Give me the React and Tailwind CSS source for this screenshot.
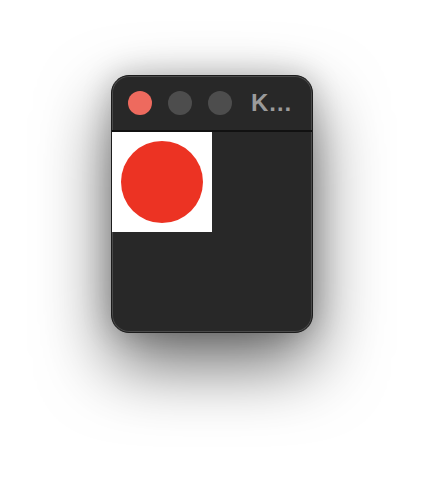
import React from "react";

const LIGHTS = ["bg-[#ee6a5e]", "bg-[#4d4d4d]", "bg-[#4d4d4d]"];

export default function App() {
  return (
    <div className="w-[424px] h-[480px] bg-white flex justify-center pt-[75px]" style={{ fontFamily: '"Liberation Sans", Arial, sans-serif' }}>
      {/* window */}
      <div className="w-[202px] h-[258px] flex flex-col rounded-[18px] overflow-hidden border border-[#1c1c1c] bg-[#282828] shadow-[inset_0_0_0_1px_#4a4a4a,0_30px_70px_rgba(0,0,0,0.6),0_0_30px_rgba(0,0,0,0.2)]">
        {/* title bar */}
        <div className="h-[54px] shrink-0 flex items-center pl-[16px] pr-[16px] gap-[16px]">
          {LIGHTS.map((c, i) => (
            <span key={i} className={`w-[24px] h-[24px] rounded-full shrink-0 ${c}`} />
          ))}
          <span className="flex-1 min-w-0 truncate ml-[3px] text-[24px] leading-none font-bold text-[#9b9b9b]">
            Kreis
          </span>
        </div>
        <div className="h-[2px] shrink-0 bg-[#111111]" />
        {/* content */}
        <div className="flex-1">
          <div className="w-[100px] h-[100px] bg-white flex items-center justify-center">
            <div className="w-[82px] h-[82px] rounded-full bg-[#ec3323]" />
          </div>
        </div>
      </div>
    </div>
  );
}
